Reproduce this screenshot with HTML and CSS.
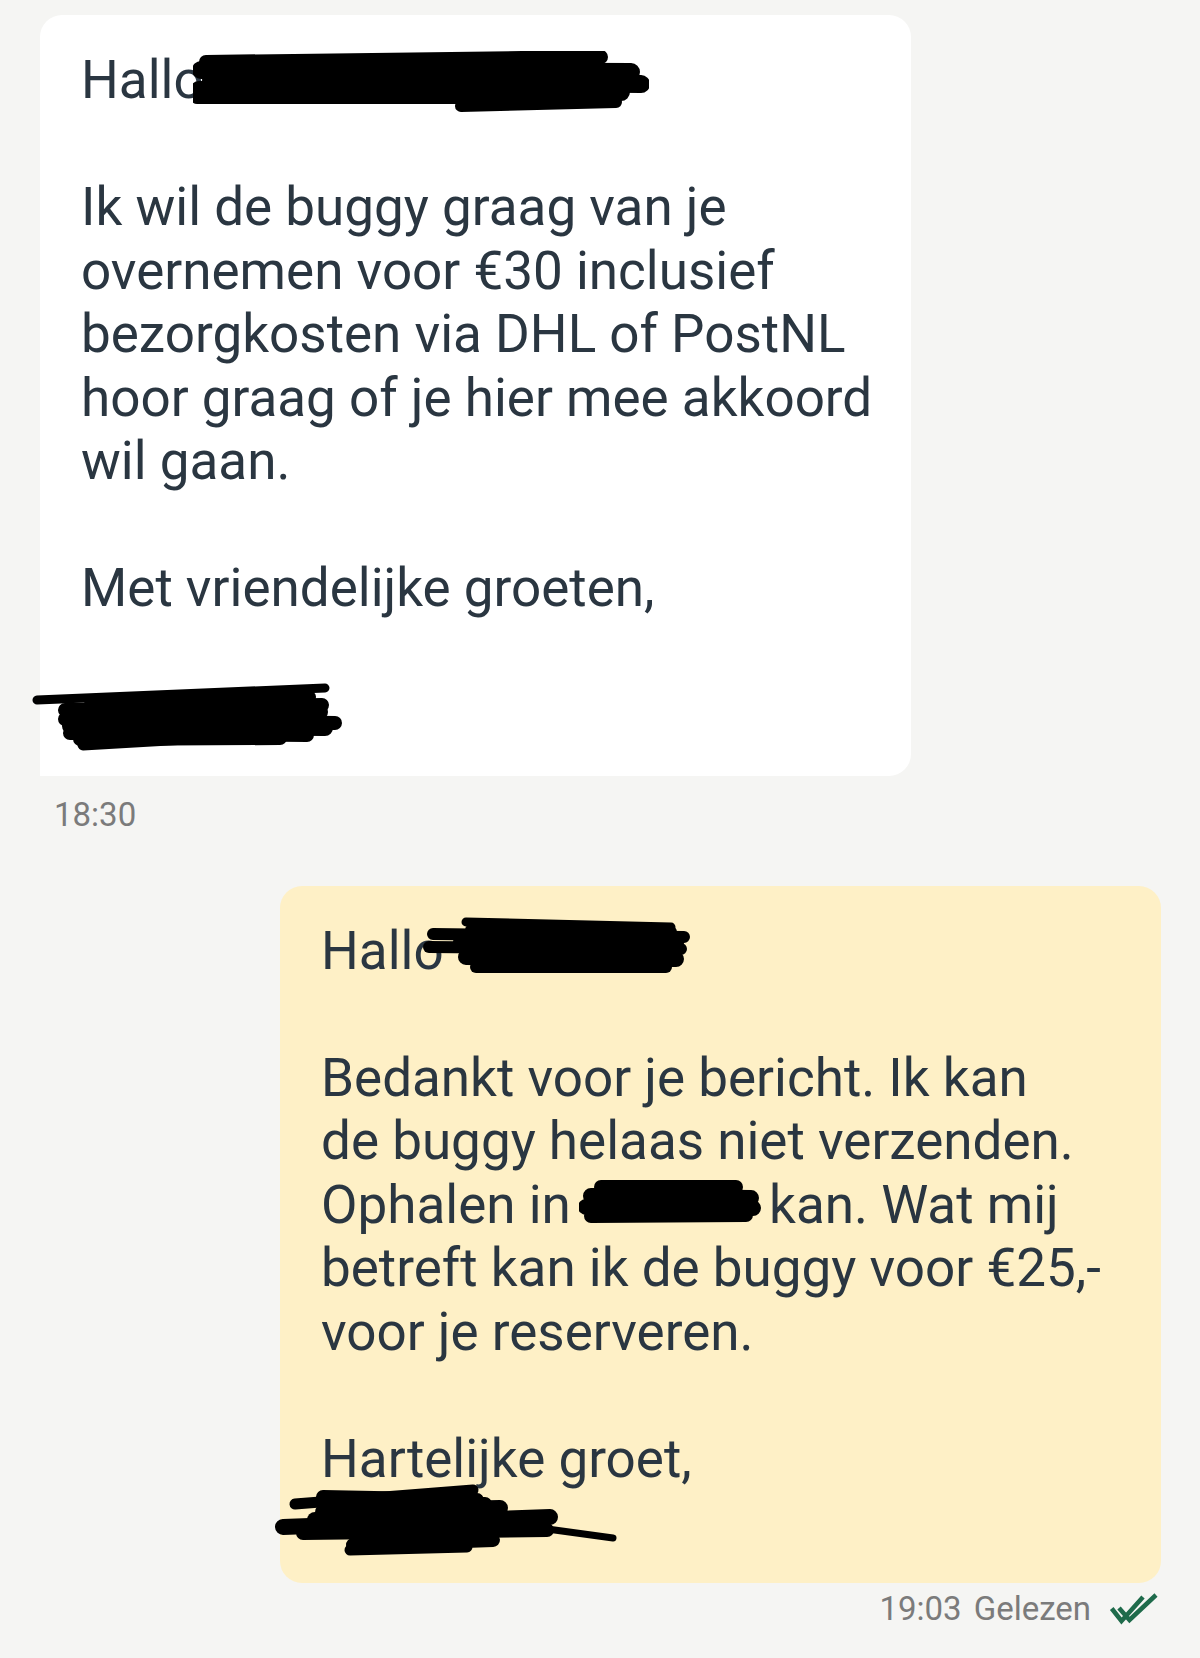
FILE: index.html
```html
<!DOCTYPE html>
<html lang="nl">
<head>
<meta charset="utf-8">
<title>Chat</title>
<link rel="stylesheet" href="styles.css">
</head>
<body>
<div class="chat">
  <div class="msg msg-in">
    <div class="bubble bubble-in">
      <p class="para">Hallo<span class="redact redact-a"><svg width="456" height="62" viewBox="0 0 456 62"><g stroke="#000" stroke-linecap="round" fill="none"><path d="M13 11 L408 6" stroke-width="14"/><path d="M8 19 L438 21" stroke-width="18"/><path d="M18 29 L448 33" stroke-width="18"/><path d="M6 39 L428 41" stroke-width="18"/><path d="M4 46 L368 46" stroke-width="14"/><path d="M268 55 L423 51" stroke-width="12"/><path d="M408 29 L450 35" stroke-width="10"/><path d="M30 14 L400 14" stroke-width="12"/></g></svg></span></p>
      <p class="para">Ik wil de buggy graag van je<br>overnemen voor €30 inclusief<br>bezorgkosten via DHL of PostNL<br>hoor graag of je hier mee akkoord<br>wil gaan.</p>
      <p class="para">Met vriendelijke groeten,</p>
      <div class="sig sig-gap"><svg class="sig-a" width="312" height="75" viewBox="0 0 312 75"><g stroke="#000" stroke-linecap="round" fill="none"><path d="M7 20 L295 8" stroke-width="9"/><path d="M35 30 L292 25" stroke-width="14"/><path d="M35 39 L305 43" stroke-width="14"/><path d="M40 53 L277 55" stroke-width="14"/><path d="M53 65 L190 57" stroke-width="11"/><path d="M40 34 L290 32" stroke-width="16"/><path d="M40 46 L295 48" stroke-width="16"/><path d="M50 59 L250 58" stroke-width="14"/><path d="M60 24 L280 17" stroke-width="12"/></g></svg></div>
    </div>
    <div class="time time-in">18:30</div>
  </div>

  <div class="msg msg-out">
    <div class="bubble bubble-out">
      <p class="para">Hallo<span class="redact redact-d"><svg width="270" height="65" viewBox="0 0 270 65"><g stroke="#000" stroke-linecap="round" fill="none"><path d="M45 8 L250 13" stroke-width="9"/><path d="M12 20 L263 23" stroke-width="12"/><path d="M8 33 L260 35" stroke-width="12"/><path d="M45 43 L255 45" stroke-width="16"/><path d="M55 53 L245 53" stroke-width="12"/><path d="M40 28 L255 29" stroke-width="16"/><path d="M50 16 L250 18" stroke-width="12"/></g></svg></span></p>
      <p class="para">Bedankt voor je bericht. Ik kan<br>de buggy helaas niet verzenden.<br>Ophalen in <span class="redact redact-word"><svg width="182" height="52" viewBox="0 0 182 52"><g stroke="#000" stroke-linecap="round" fill="none"><path d="M22 9 L157 9" stroke-width="14"/><path d="M12 18 L172 20" stroke-width="16"/><path d="M7 29 L174 30" stroke-width="16"/><path d="M12 38 L167 37" stroke-width="14"/></g></svg></span> kan. Wat mij<br>betreft kan ik de buggy voor €25,-<br>voor je reserveren.</p>
      <p class="para">Hartelijke groet,</p>
      <div class="sig"><svg class="sig-e" width="345" height="80" viewBox="0 0 345 80"><g stroke="#000" stroke-linecap="round" fill="none"><path d="M20 24 L198 10" stroke-width="11"/><path d="M48 17 L202 20" stroke-width="14"/><path d="M8 47 L275 37" stroke-width="16"/><path d="M48 32 L225 28" stroke-width="16"/><path d="M28 53 L272 50" stroke-width="14"/><path d="M78 65 L218 60" stroke-width="14"/><path d="M265 48 L338 58" stroke-width="7"/><path d="M75 70 L192 67" stroke-width="11"/><path d="M40 40 L250 40" stroke-width="16"/><path d="M50 25 L210 24" stroke-width="14"/></g></svg></div>
    </div>
    <div class="status">
      <span class="time">19:03</span>
      <span class="time read">Gelezen</span>
      <svg class="checks" width="52" height="34" viewBox="0 0 52 34"><g stroke="#1f6b4b" stroke-width="4.5" fill="none" stroke-linejoin="miter"><path d="M3.7 17.5 L13.5 30 L35 6"/><path d="M11 17 L21.5 29 L48 4"/></g></svg>
    </div>
  </div>
</div>
</body>
</html>
```

FILE: styles.css
```css
html, body {
  margin: 0;
  padding: 0;
  background: #f5f5f3;
}

body {
  width: 1200px;
  min-height: 1658px;
  font-family: Roboto, "Noto Sans", sans-serif;
}

.chat {
  display: flex;
  flex-direction: column;
  padding-top: 15px;
}

.msg {
  display: flex;
  flex-direction: column;
}

.msg-in {
  align-items: flex-start;
  margin-left: 40px;
}

.msg-out {
  align-items: flex-end;
  margin-right: 39px;
  margin-top: 52px;
}

.bubble {
  box-sizing: border-box;
  padding: 34px 36px 28px 41px;
  font-size: 53px;
  line-height: 63.5px;
  color: #2a3641;
}

.bubble-in {
  width: 871px;
  background: #ffffff;
  border-radius: 22px 22px 22px 0;
}

.bubble-out {
  width: 881px;
  background: #fef0c6;
  border-radius: 22px;
}

.para {
  margin: 0;
}

.para + .para {
  margin-top: 63.5px;
}

.redact {
  position: relative;
  display: inline-block;
  width: 0;
  height: 0;
}

.redact svg {
  position: absolute;
}

.redact-a svg {
  left: -11px;
  top: -47px;
}

.redact-d svg {
  left: -23px;
  top: -55px;
}

.redact-word {
  width: 172px;
}

.redact-word svg {
  left: -5px;
  top: -45px;
}

.sig {
  position: relative;
  height: 63.5px;
}

.sig-gap {
  margin-top: 63.5px;
}

.sig svg {
  position: absolute;
}

.sig-a {
  left: -51px;
  top: -4px;
}

.sig-e {
  left: -46px;
  top: -11px;
}

.time {
  font-size: 33px;
  line-height: 39px;
  color: #7b7b7b;
}

.time-in {
  margin-top: 19px;
  margin-left: 14px;
}

.status {
  display: flex;
  align-items: center;
  margin-top: 6px;
  margin-right: 1px;
}

.read {
  margin-left: 12px;
}

.checks {
  margin-left: 17px;
}
```
